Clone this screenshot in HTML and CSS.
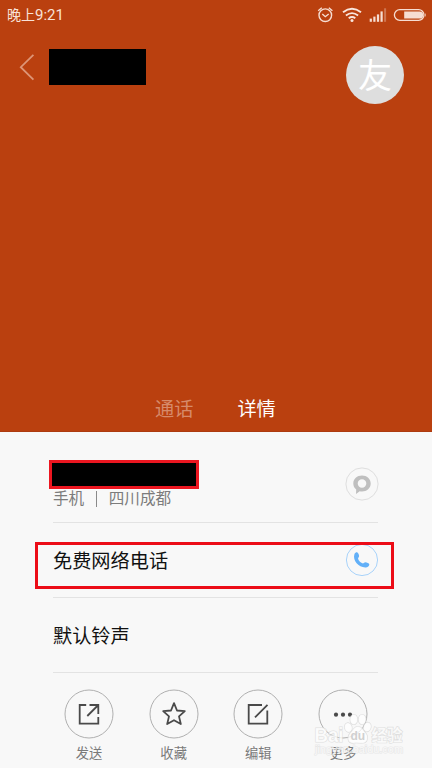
FILE: index.html
```html
<!DOCTYPE html>
<html lang="zh-CN">
<head>
    <meta charset="UTF-8">
    <meta name="viewport" content="width=device-width, initial-scale=1.0">
    <title>详情</title>
    <link rel="stylesheet" href="styles.css">
</head>
<body>
    <div class="screen">
        <header class="header">
            <div class="status-bar">
                <div class="time">晚上<span>9:21</span></div>
                <svg class="status-icons" width="132" height="32" viewBox="0 0 132 32">
                    <!-- alarm -->
                    <g fill="none" stroke="#f6ddd2" stroke-width="1.4">
                        <circle cx="25.3" cy="15.2" r="6.3"/>
                        <path d="M22.3 14l3 2.7 3.4-2.7"/>
                        <path d="M18.2 10.8l3.6-3M32.4 10.8l-3.6-3"/>
                    </g>
                    <!-- wifi -->
                    <g fill="none" stroke="#f9e6dd" stroke-width="1.9">
                        <path d="M43 12.3q9-7 18 0"/>
                        <path d="M45.9 15.4q6.1-4.6 12.2 0"/>
                        <path d="M48.7 18.2q3.3-2.4 6.6 0"/>
                    </g>
                    <circle cx="52" cy="20.4" r="1.5" fill="#f9e6dd"/>
                    <!-- signal -->
                    <g fill="#f6ddd2">
                        <rect x="69.7" y="18.6" width="2.2" height="3.2"/>
                        <rect x="73.3" y="16.6" width="2.2" height="5.2"/>
                        <rect x="76.9" y="14.4" width="2.2" height="7.4"/>
                        <rect x="80.5" y="11.4" width="2.2" height="10.4"/>
                        <rect x="84.1" y="8.3" width="2" height="13.5" opacity=".35"/>
                    </g>
                    <!-- battery -->
                    <rect x="94.4" y="9.6" width="29.6" height="10.8" rx="5.4" fill="none" stroke="#f6ddd2" stroke-width="1.3"/>
                    <path d="M104.2 11.4h15.4a3.6 3.6 0 0 1 0 7.2h-15.4z" fill="#f6ddd2"/>
                    <path d="M125 12.8q1.6 2.2 0 4.4z" fill="#f6ddd2"/>
                </svg>
            </div>
            <div class="title-bar">
                <svg class="back" width="16" height="28" viewBox="0 0 16 28">
                    <path d="M14.4 1.8L1.8 14.2l12.6 12.4" fill="none" stroke="#dd9577" stroke-width="1.8"/>
                </svg>
                <div class="name-mask"></div>
                <div class="avatar">友</div>
            </div>
            <nav class="tabs">
                <span class="tab">通话</span>
                <span class="tab active">详情</span>
            </nav>
        </header>

        <main class="list">
            <div class="row row-phone">
                <div>
                    <div class="number-mask"></div>
                    <div class="meta"><span>手机</span><i class="bar"></i><span>四川成都</span></div>
                </div>
                <svg class="row-icon" width="34" height="34" viewBox="0 0 34 34">
                    <circle cx="17" cy="17" r="16.1" fill="none" stroke="#dedede"/>
                    <path fill="#bfbfbf" fill-rule="evenodd" d="M17 8.5c4.9 0 8.7 3.5 8.7 8s-3.800 8-8.700 8c-.8 0-1.600-.1-2.300-.3L11 26.900l.2-4.400c-1.800-1.400-2.900-3.500-2.900-6 0-4.500 3.800-8 8.700-8zM17 12.300a4.300 4.200 0 1 0 0 8.400a4.300 4.200 0 1 0 0-8.400z"/>
                </svg>
            </div>
            <div class="row">
                <div class="label">免费网络电话</div>
                <svg class="row-icon" width="34" height="34" viewBox="0 0 34 34">
                    <circle cx="17" cy="17" r="15.6" fill="none" stroke="#a9d3fa"/>
                    <path fill="#62b0f8" d="M9.400 11.200C10 9.900 11.300 9.200 12.300 9.400c1 .5 1.700 2.300 1.800 3.600.1 1.200-1.200 1.600-1 2.700.5 2 2.300 3.800 4.300 4.600 1.200.5 1.700-1.100 3-1.100 1.400.1 3.700.9 3.900 2.100.2 1.700-1.700 3.100-3.700 3.200-3.500.1-7-1.600-9.200-4.400-2-2.500-3-6.100-2-8.900z"/>
                </svg>
                <div class="highlight"></div>
            </div>
            <div class="row">
                <div class="label">默认铃声</div>
            </div>
        </main>

        <footer class="actions">
            <div class="action">
                <svg width="50" height="50" viewBox="0 0 50 50">
                    <circle cx="25" cy="25" r="24" class="ring"/>
                    <path class="glyph" d="M22.2 16H15.700V34.700H34.300V28M25.500 16H34.300V25M34.300 16L23.300 27"/>
                </svg>
                <span>发送</span>
            </div>
            <div class="action">
                <svg width="50" height="50" viewBox="0 0 50 50">
                    <circle cx="25" cy="25" r="24" class="ring"/>
                    <path class="glyph" stroke-linejoin="round" d="M25 14.200L28 21.500L35.800 22.200L30 27.400L31.800 35L25 31.200L18.200 35L20 27.400L14.200 22.200L22 21.500Z"/>
                </svg>
                <span>收藏</span>
            </div>
            <div class="action">
                <svg width="50" height="50" viewBox="0 0 50 50">
                    <circle cx="25" cy="25" r="24" class="ring"/>
                    <path class="glyph" d="M29 16H15.700V34.700H34.300V21.500M34.500 15.800L22 28.300"/>
                </svg>
                <span>编辑</span>
            </div>
            <div class="action">
                <svg width="50" height="50" viewBox="0 0 50 50">
                    <circle cx="25" cy="25" r="24" class="ring"/>
                    <g fill="#4a4a4a">
                        <circle cx="18" cy="25.700" r="2.100"/>
                        <circle cx="25" cy="25.700" r="2.100"/>
                        <circle cx="32" cy="25.700" r="2.100"/>
                    </g>
                </svg>
                <span>更多</span>
            </div>
        </footer>

        <svg class="watermark" width="100" height="50" viewBox="0 0 100 50">
            <g class="mark">
                <ellipse cx="38.300" cy="17.500" rx="3.600" ry="4.600" transform="rotate(-15 38.300 17.500)"/>
                <ellipse cx="43.800" cy="9.500" rx="3.600" ry="5"/>
                <ellipse cx="52.200" cy="9.500" rx="3.600" ry="5"/>
                <ellipse cx="57.300" cy="17" rx="3.600" ry="4.600" transform="rotate(15 57.300 17)"/>
                <path d="M48 16.500c4 0 5 4 7.500 6.500 3 3 2.500 10-3 10-3 0-6-.6-9 0-6 .5-6.500-6-3.500-9.500 3-3 4-7 8-7z"/>
                <text x="4.500" y="32" class="mark-latin" textLength="29" lengthAdjust="spacingAndGlyphs">Bai</text>
                <text x="61.500" y="31" class="mark-cjk">经验</text>
                <text x="5" y="43" class="mark-url" textLength="88" lengthAdjust="spacingAndGlyphs">jingyan.baidu.com</text>
            </g>
            <text x="40.500" y="30" class="mark-du">du</text>
        </svg>
    </div>
</body>
</html>
```

FILE: styles.css
```css
* {
    box-sizing: border-box;
}
body {
    margin: 0;
    font-family: Roboto, "Noto Sans CJK SC", sans-serif;
    background-color: #f8f8f8;
}
.screen {
    position: relative;
    width: 432px;
    height: 768px;
    overflow: hidden;
}
.header {
    display: flex;
    flex-direction: column;
    height: 432px;
    background-color: #ba400f;
    border-bottom: 1px solid #ad3b10;
}
.status-bar {
    display: flex;
    justify-content: space-between;
    height: 32px;
    padding-left: 7px;
}
.time {
    font-size: 14px;
    line-height: 30px;
    color: #f8e2d8;
}
.time span {
    font-size: 15px;
}
.title-bar {
    display: flex;
    align-items: flex-start;
    padding: 14px 28px 0 19px;
}
.back {
    margin-top: 7px;
}
.name-mask {
    width: 97px;
    height: 36px;
    margin: 3px 0 0 14px;
    background-color: #000;
}
.avatar {
    width: 58px;
    height: 58px;
    margin-left: auto;
    border-radius: 50%;
    background-color: #dedede;
    color: #fff;
    font-size: 34px;
    line-height: 60px;
    text-align: center;
}
.tabs {
    display: flex;
    gap: 44px;
    margin-top: auto;
    padding: 0 0 7px 155px;
}
.tab {
    font-size: 19.2px;
    line-height: 28px;
    color: #d68a6a;
}
.tab.active {
    color: #fff;
}
.list {
    padding: 0 54px 0 53px;
}
.row {
    position: relative;
    display: flex;
    justify-content: space-between;
    align-items: center;
    height: 75px;
    border-bottom: 1px solid #e3e3e3;
}
.row-phone {
    height: 91px;
    align-items: flex-start;
    padding-top: 28px;
}
.number-mask {
    width: 150px;
    height: 29px;
    margin-left: -4px;
    background-color: #000;
    border: 3px solid #ec1620;
}
.meta {
    display: flex;
    align-items: center;
    font-size: 15.6px;
    line-height: 20px;
    color: #7c7c7c;
}
.bar {
    width: 1px;
    height: 16px;
    margin: 0 12px 0 11.5px;
    background-color: #8a8a8a;
}
.label {
    padding-top: 4px;
    font-size: 19.2px;
    line-height: 28px;
    color: #111;
}
.row-icon {
    margin-right: -1px;
}
.row-phone .row-icon {
    margin-top: 7px;
}
.highlight {
    position: absolute;
    left: -18px;
    top: 19px;
    width: 359px;
    height: 47px;
    border: 3px solid #ec0c17;
}
.actions {
    display: flex;
    justify-content: space-between;
    padding: 16px 64px 0;
}
.action {
    display: flex;
    flex-direction: column;
    align-items: center;
    font-size: 13.3px;
    line-height: 20px;
    color: #7a7a7a;
}
.action span {
    margin-top: 5px;
}
.ring {
    fill: none;
    stroke: #b0b0b0;
}
.glyph {
    fill: none;
    stroke: #4a4a4a;
    stroke-width: 1.8;
}
.watermark {
    position: absolute;
    left: 310px;
    top: 710px;
}
.mark {
    fill: rgba(255, 255, 255, 0.75);
    stroke: rgba(205, 205, 205, 0.6);
    stroke-width: 1.2;
    paint-order: stroke;
}
.mark-latin {
    font: bold 21px "Liberation Sans", sans-serif;
}
.mark-cjk {
    font: bold 15.5px "Noto Sans CJK SC", sans-serif;
}
.mark-url {
    font: 10.5px "Liberation Sans", sans-serif;
    stroke: rgba(215, 215, 215, 0.5);
}
.mark-du {
    font: bold 12px "Liberation Sans", sans-serif;
    fill: #d0d0d0;
}
```
